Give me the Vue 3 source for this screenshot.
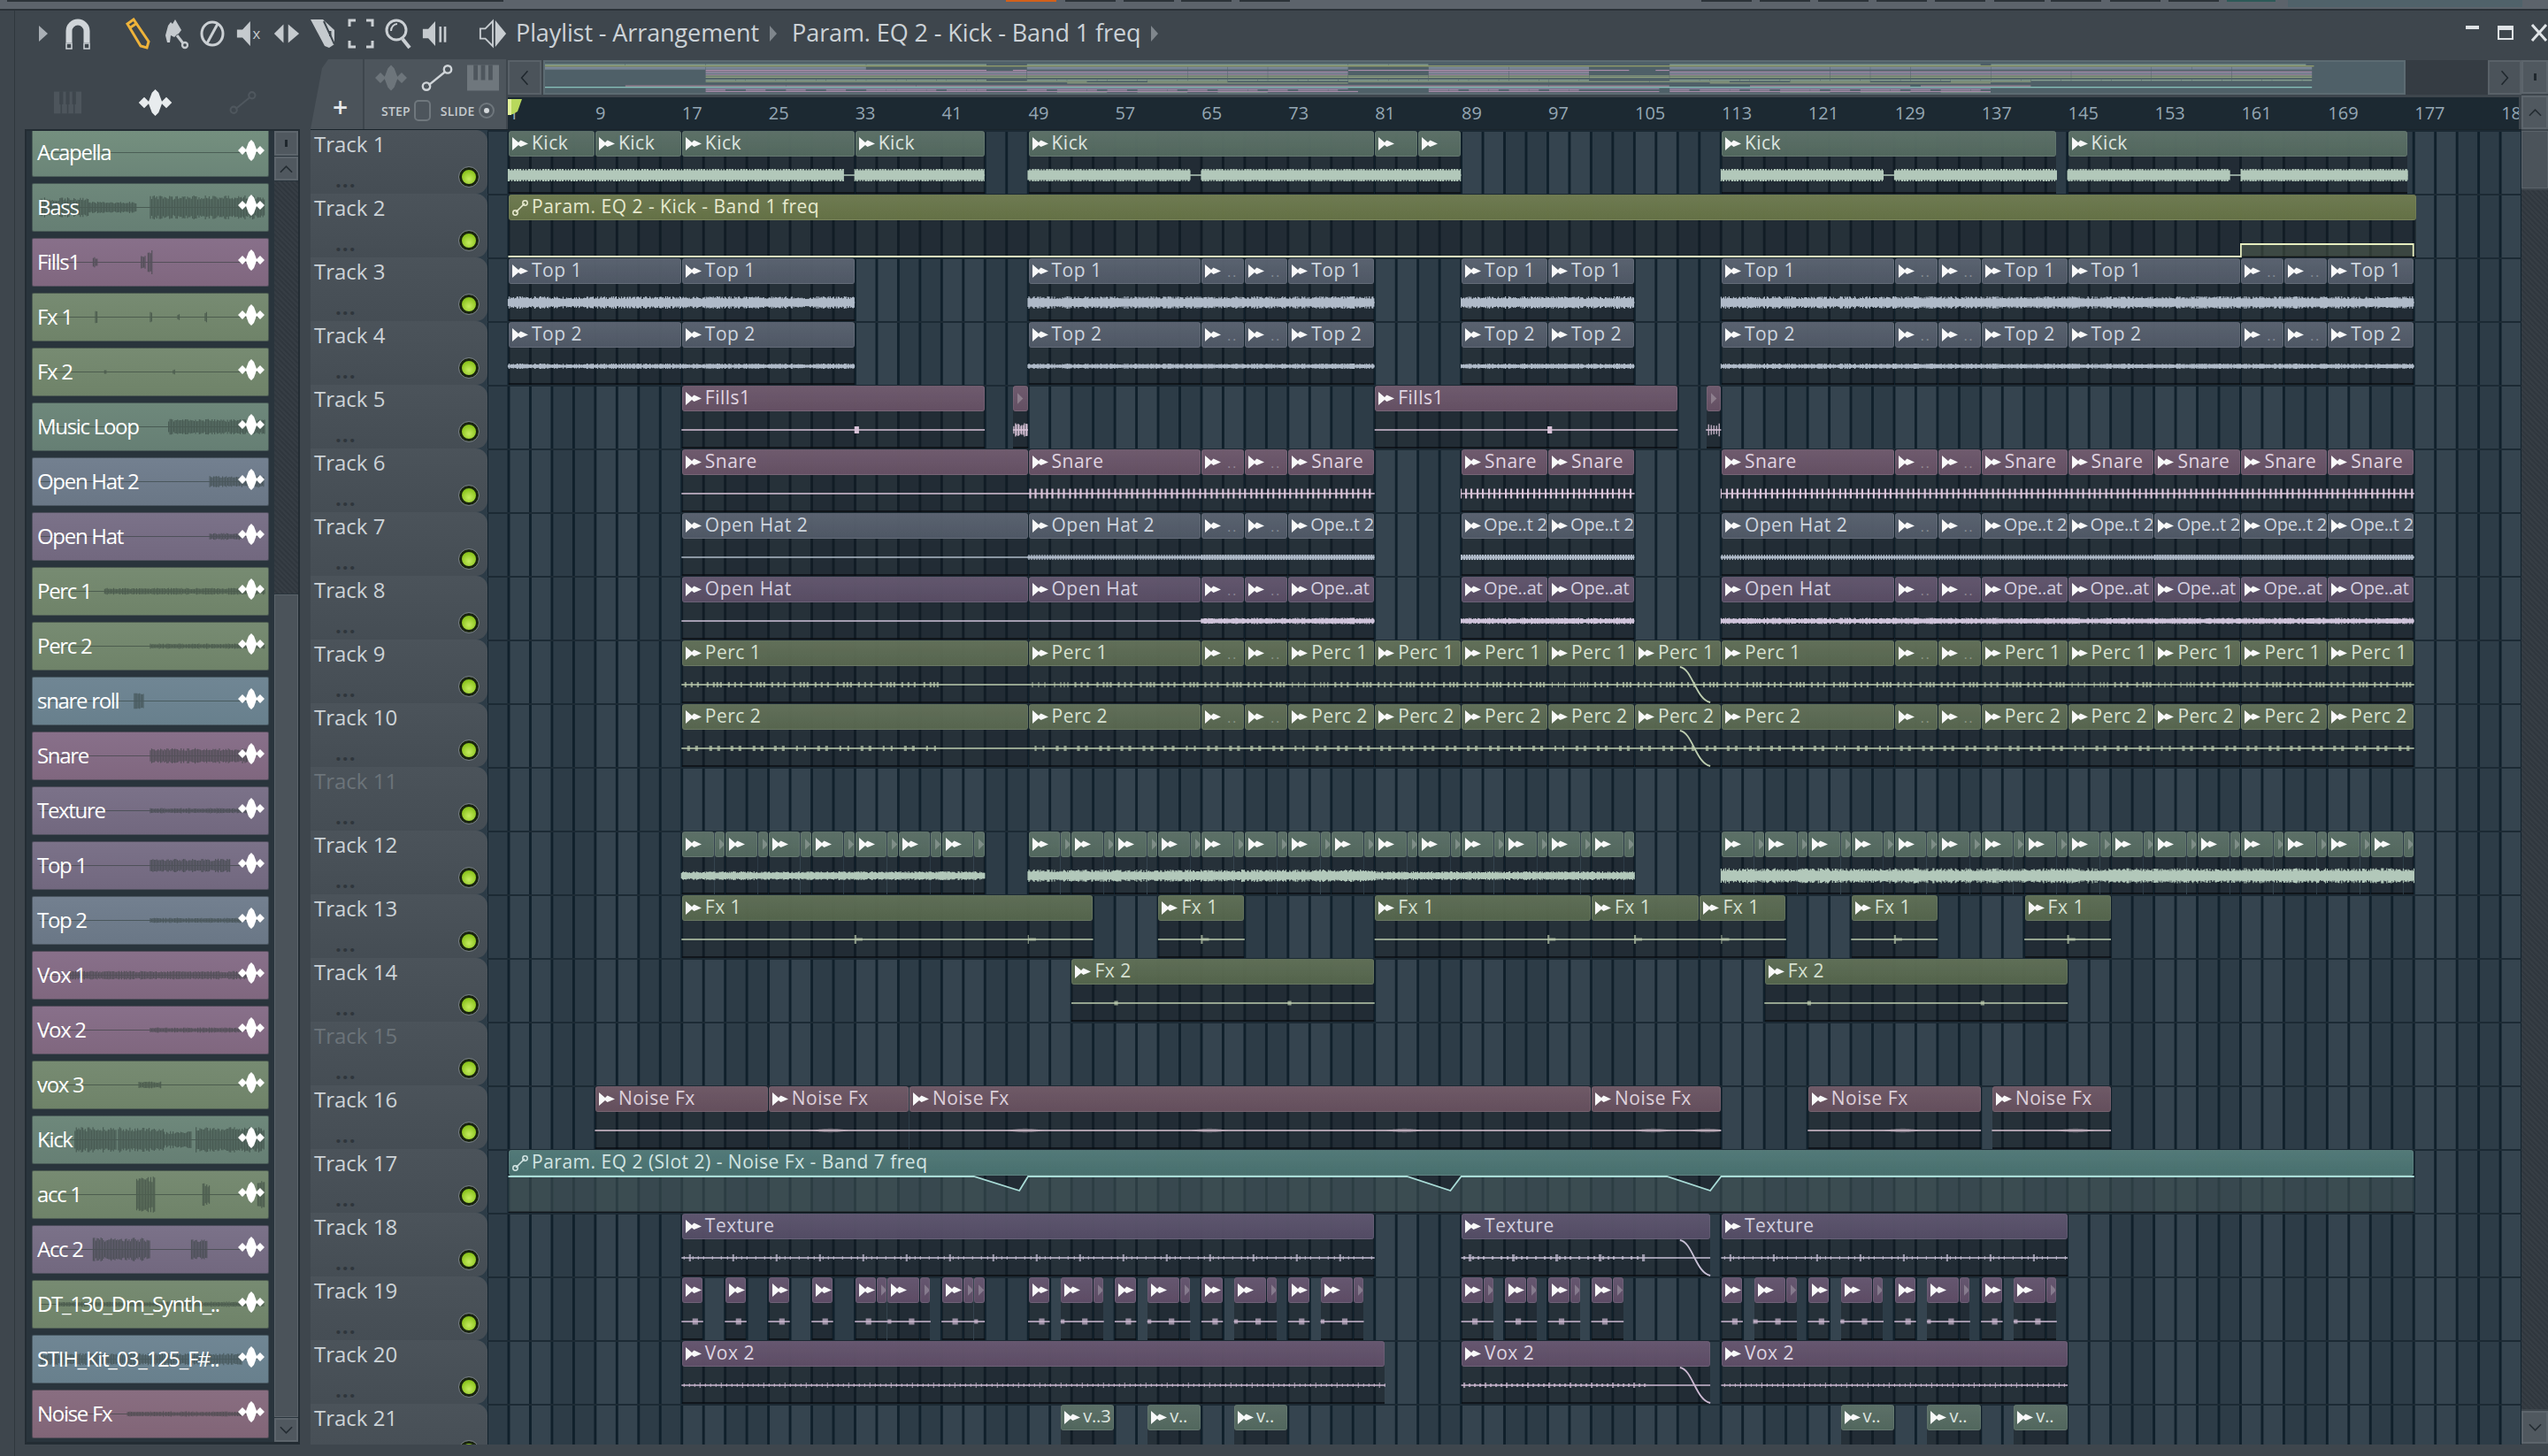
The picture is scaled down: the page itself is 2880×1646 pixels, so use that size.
<template>
  <div class="app">
    <div class="topstrip">
      <span v-for="b in stripBtns" :key="b.x" class="strip-btn" :class="b.c" :style="{ left: b.x + 'px', width: b.w + 'px' }"></span>
    </div>

    <div class="window">
      <div class="titlebar">
        <div class="tools">
          <svg class="ic play" viewBox="0 0 30 30"><path d="M10 6l10 9-10 9z" fill="#a9afb5" /></svg>
          <svg class="ic magnet" viewBox="0 0 30 36"><path d="M5 28V15a10 10 0 0 1 20 0v13" fill="none" stroke="#d0d5d9" stroke-width="7" /><path d="M2 29h6v6H2zM22 29h6v6h-6z" fill="none" stroke="#d0d5d9" stroke-width="1.5" /></svg>
          <svg class="ic pencil" viewBox="0 0 30 36"><path d="M3 7l7-5 17 25-2 7-7-2z" fill="none" stroke="#eeb33a" stroke-width="3" /><path d="M5 12l9-6" stroke="#eeb33a" stroke-width="3" /></svg>
          <svg class="ic" viewBox="0 0 30 36"><path d="M4 20L7 9l3-4 2 2 3-5 7 12-3 4-2 1-3 3-4-2-1 8-3 0z" fill="#c5cace" /><path d="M17 20l7 9" stroke="#c5cace" stroke-width="3" /><circle cx="26" cy="31" r="3" fill="none" stroke="#c5cace" stroke-width="2.4" /></svg>
          <svg class="ic" viewBox="0 0 30 36"><ellipse cx="15" cy="18" rx="12" ry="13" fill="none" stroke="#cbd0d4" stroke-width="3" /><path d="M21 7L9 29" stroke="#cbd0d4" stroke-width="3" /></svg>
          <svg class="ic wide" viewBox="0 0 34 36"><path d="M1 13h7l10-11v32L8 23H1z" fill="#c5cace" /><text x="21" y="25" class="mute-x">x</text></svg>
          <svg class="ic wide" viewBox="0 0 34 36"><path d="M1 18l12-12v24zM33 18L19 6v24z" fill="#c5cace" /></svg>
          <svg class="ic" viewBox="0 0 30 36"><path d="M0 2h14l13 12v16l-6 4-5-2z" fill="#c5cace" /><path d="M15 4l12 26" stroke="#3e464d" stroke-width="2" /><rect x="21" y="15" width="2.5" height="6" fill="#3e464d" /></svg>
          <svg class="ic" viewBox="0 0 30 36"><path d="M2 10V3h7M21 3h7v7M28 26v7h-7M9 33H2v-7" fill="none" stroke="#cbd0d4" stroke-width="3" /></svg>
          <svg class="ic" viewBox="0 0 30 36"><circle cx="13" cy="14" r="11" fill="none" stroke="#cbd0d4" stroke-width="3" /><path d="M7 15a7 8 0 0 1 7-8" fill="none" stroke="#cbd0d4" stroke-width="2" /><path d="M20 24l8 10" stroke="#cbd0d4" stroke-width="4" /></svg>
          <svg class="ic wide" viewBox="0 0 34 36"><path d="M1 12h7L17 2v32L8 24H1z" fill="#c5cace" /><rect x="22" y="9" width="3" height="20" fill="#c5cace" /><rect x="28" y="9" width="3" height="20" fill="#c5cace" /></svg>
        </div>
        <svg class="ic speaker" viewBox="0 0 34 38"><path d="M2 13h6l9-9v30l-9-9H2z" fill="none" stroke="#c8cdd1" stroke-width="2" /><path d="M20 3l13 16-13 16z" fill="#c8cdd1" /></svg>
        <span class="title">Playlist - Arrangement</span>
        <svg class="crumb" viewBox="0 0 10 20"><path d="M1 1l8 9-8 9z" fill="#7f868c" /></svg>
        <span class="title">Param. EQ 2 - Kick - Band 1 freq</span>
        <svg class="crumb" viewBox="0 0 10 20"><path d="M1 1l8 9-8 9z" fill="#7f868c" /></svg>
        <div class="winbtns">
          <span class="w-min"></span>
          <span class="w-max"></span>
          <svg viewBox="0 0 20 22" class="w-x"><path d="M2 2l16 18M18 2L2 20" stroke="#dfe3e6" stroke-width="3" /></svg>
        </div>
      </div>

      <div class="main">
        <div class="side">
          <div class="side-tabs">
            <svg class="st" viewBox="0 0 30 24"><path d="M0 0h30v24H0z" fill="#4d555c" /><path d="M8 0v24M15 0v24M22 0v24" stroke="#3e464d" stroke-width="1.5" /><path d="M6 0h4v14H6zM13 0h4v14h-4zM20 0h4v14h-4z" fill="#3e464d" /></svg>
            <svg class="st wv" viewBox="0 0 30 24"><path :d="waveIcon" fill="#e8ecee" /></svg>
            <svg class="st" viewBox="0 0 30 24"><path d="M7 19L23 6" stroke="#4f575e" stroke-width="2" /><circle cx="5" cy="20" r="3.5" fill="none" stroke="#4f575e" stroke-width="2" /><circle cx="25" cy="4" r="3.5" fill="none" stroke="#4f575e" stroke-width="2" /></svg>
          </div>
          <div class="browser">
            <div class="blist">
              <div v-for="b in browserItems" :key="b.name" class="bitem" :class="'b-' + b.c">
                <svg class="bwave" viewBox="0 0 268 55"><path :d="b.path" /></svg>
                <span class="bname">{{ b.name }}</span>
                <svg class="bicon" viewBox="0 0 30 24"><path :d="waveIcon" /></svg>
              </div>
            </div>
            <div class="bscroll">
              <div class="sbtn small"><i></i></div>
              <div class="sbtn up"><svg viewBox="0 0 16 10"><path d="M1 9l7-7 7 7" /></svg></div>
              <div class="hatch"></div>
              <div class="sthumb"></div>
              <div class="sbtn down"><svg viewBox="0 0 16 10"><path d="M1 1l7 7 7-7" /></svg></div>
            </div>
          </div>
        </div>

        <div class="playlist">
          <div class="pl-main">
            <div class="pl-head">
              <div class="addtab"><span class="plus">+</span></div>
              <div class="snap">
                <div class="snap-icons">
                  <svg viewBox="0 0 30 24"><path :d="waveIcon" fill="#6d757b" /></svg>
                  <svg viewBox="0 0 30 24"><path d="M7 19L23 6" stroke="#d0d5d9" stroke-width="2" /><circle cx="5" cy="20" r="3.5" fill="none" stroke="#d0d5d9" stroke-width="2" /><circle cx="25" cy="4" r="3.5" fill="none" stroke="#d0d5d9" stroke-width="2" /></svg>
                  <svg viewBox="0 0 30 24"><path d="M0 0h30v24H0z" fill="#6f777d" /><path d="M6 0h4v14H6zM13 0h4v14h-4zM20 0h4v14h-4z" fill="#4e565d" /></svg>
                </div>
                <div class="snap-modes">
                  <span class="mode">STEP</span><span class="chk"></span>
                  <span class="mode slide">SLIDE</span><span class="radio"><i></i></span>
                </div>
              </div>
              <div class="head-right">
                <div class="overview-row">
                  <div class="navbtn"><svg viewBox="0 0 14 22"><path d="M11 2L3 11l8 9" /></svg></div>
                  <div class="overview">
                    <svg width="2105" height="38">
                      <rect v-for="(m, i) in miniRects" :key="i" :x="m.x" :y="m.y" :width="m.w" height="1.2" :fill="m.f" />
                    </svg>
                  </div>
                  <div class="ov-gap"></div>
                  <div class="navbtn"><svg viewBox="0 0 14 22"><path d="M3 2l8 9-8 9" /></svg></div>
                </div>
                <div class="ruler">
                  <span v-for="r in rulerMarks" :key="r.n" class="rmark" :style="{ left: r.x + 'px' }">{{ r.n }}</span>
                  <svg class="marker" viewBox="0 0 16 18"><path d="M0 0h16l-5 14-5 3-6 1z" fill="#b8d85c" /><path d="M0 0h4v18H0z" fill="#e3f09b" /></svg>
                </div>
              </div>
            </div>

            <div class="rows">
              <div v-for="t in tracks" :key="t.n" class="row">
                <div class="thead" :class="{ muted: t.muted }">
                  <span class="tname">Track {{ t.n }}</span>
                  <span class="tdots">...</span>
                  <span class="led"></span>
                </div>
                <div class="lane" :class="'t-' + t.c">
                  <div v-for="(cl, i) in t.clips" :key="i" class="clip" :style="{ left: cl.x + 'px', width: cl.w + 'px' }">
                    <div class="clip-head">
                      <svg v-if="t.auto" class="ico-auto" viewBox="0 0 18 18"><path d="M4 14L14 4" stroke="currentColor" stroke-width="1.6" /><circle cx="3.5" cy="14.5" r="2.7" fill="none" stroke="currentColor" stroke-width="1.5" /><circle cx="14.5" cy="3.5" r="2.7" fill="none" stroke="currentColor" stroke-width="1.5" /></svg>
                      <svg v-else-if="cl.tiny" class="ico-tiny" viewBox="0 0 10 16"><path d="M0 1l7 7-7 7z" /></svg>
                      <svg v-else class="ico-clip" viewBox="0 0 18 15"><path d="M0 0l7 6 2.5-2.5L18 7.5 9.5 11 7 9 0 15z" /></svg>
                      <span v-if="cl.label === '..'" class="clip-dots">..</span>
                      <span v-else-if="cl.label" class="clip-label" :class="{ tight: cl.label.includes('..') }">{{ cl.label }}</span>
                    </div>
                  </div>
                  <svg class="wave" width="2296" height="72">
                    <path v-if="t.fill" :d="t.fill" class="afill" />
                    <path v-if="t.line" :d="t.line" class="aline" />
                    <path v-if="t.base" :d="t.base" class="wbase" />
                    <path v-if="t.wave" :d="t.wave" class="wspike" :class="t.soft" />
                    <path v-for="(f, i) in t.fades" :key="i" :d="f" class="fade" />
                  </svg>
                </div>
              </div>
            </div>
          </div>

          <div class="vbar">
            <div class="sbtn square"><i></i></div>
            <div class="sbtn upb"><svg viewBox="0 0 16 10"><path d="M1 9l7-7 7 7" /></svg></div>
            <div class="sthumb vthumb"></div>
            <div class="hatch"></div>
            <div class="sbtn downb"><svg viewBox="0 0 16 10"><path d="M1 1l7 7 7-7" /></svg></div>
          </div>
        </div>
      </div>
    </div>
  </div>
</template>

<script setup>
const PPB = 12.24
const X0 = 23.5
const barX = (b) => X0 + (b - 1) * PPB
const rnd = (i) => {
  const v = Math.sin(i * 12.9898) * 43758.5453
  return v - Math.floor(v)
}

const waveIcon = 'M0 12L5 7 9 11 12 3 15 0 18 3 21 11 25 7 30 12 25 17 21 13 18 21 15 24 12 21 9 13 5 17Z'

const stripBtns = [
  { x: 8, w: 561, c: 'dark' },
  { x: 1137, w: 57, c: 'orange' },
  { x: 2517, w: 55, c: 'teal' },
  { x: 2586, w: 265, c: 'lcd' },
]
for (const x of [1204, 1270, 1335, 1401, 1923, 1989, 2055, 2121, 2187, 2254, 2318, 2385, 2451]) {
  stripBtns.push({ x, w: 57, c: 'dark' })
}

// browser list: name, colour, envelope [from, to, amp]
const browserDefs = [
  ['Acapella', 'green', []],
  ['Bass', 'teal', [[0.02, 0.23, 12], [0.23, 0.44, 7], [0.5, 1, 14]]],
  ['Fills1', 'mauve', [[0.25, 0.27, 6], [0.46, 0.48, 8], [0.49, 0.51, 14]]],
  ['Fx 1', 'olive', [[0.26, 0.27, 7], [0.5, 0.51, 6], [0.62, 0.63, 4], [0.74, 0.75, 6]]],
  ['Fx 2', 'olive', [[0.3, 0.31, 3], [0.6, 0.61, 3]]],
  ['Music Loop', 'teal', [[0.58, 1, 9]]],
  ['Open Hat 2', 'slate', [[0.76, 1, 7]]],
  ['Open Hat', 'purple', [[0.76, 0.9, 4]]],
  ['Perc 1', 'olive', [[0.3, 1, 4]]],
  ['Perc 2', 'olive', [[0.5, 1, 3]]],
  ['snare roll', 'steel', [[0.43, 0.47, 10]]],
  ['Snare', 'mauve', [[0.5, 0.95, 9]]],
  ['Texture', 'purple', [[0.5, 0.95, 3]]],
  ['Top 1', 'purple', [[0.5, 0.85, 8]]],
  ['Top 2', 'slate', [[0.5, 0.9, 3]]],
  ['Vox 1', 'mauve', [[0.15, 0.95, 5]]],
  ['Vox 2', 'mauve', [[0.5, 0.9, 3]]],
  ['vox 3', 'olive', [[0.45, 0.55, 4]]],
  ['Kick', 'teal', [[0.17, 0.35, 15], [0.36, 0.56, 15], [0.56, 0.68, 10], [0.7, 1, 15]]],
  ['acc 1', 'olive', [[0.44, 0.52, 22], [0.73, 0.76, 14], [0.97, 1, 18]]],
  ['Acc 2', 'purple', [[0.25, 0.5, 14], [0.68, 0.75, 12]]],
  ['DT_130_Dm_Synth_..', 'olive', [[0.1, 1, 3]]],
  ['STIH_Kit_03_125_F#..', 'steel', [[0.02, 0.9, 7]]],
  ['Noise Fx', 'rose', [[0.4, 0.9, 3]]],
]
const browserItems = browserDefs.map(([name, c, env], i) => {
  let d = 'M4 27.5H264'
  env.forEach(([a, b, amp], k) => {
    for (let x = a * 268; x <= b * 268; x += 1.5) {
      const h = amp * (0.65 + 0.35 * rnd(x + i * 7 + k))
      d += `M${x.toFixed(1)} ${(27.5 - h).toFixed(1)}V${(27.5 + h).toFixed(1)}`
    }
  })
  return { name, c, path: d }
})

// arrangement helpers
const long = (a, l1, l2) => [
  [17, 49, a], [49, 65, a], [65, 69, '..'], [69, 73, '..'], [73, 81, l1],
  [89, 97, l1], [97, 105, l1],
  [113, 129, a], [129, 133, '..'], [133, 137, '..'], [137, 145, l2], [145, 153, l2], [153, 161, l2], [161, 169, l2], [169, 177, l2],
]
const topClips = (a) => [
  [1, 17, a], [17, 33, a], [49, 65, a], [65, 69, '..'], [69, 73, '..'], [73, 81, a],
  [89, 97, a], [97, 105, a],
  [113, 129, a], [129, 133, '..'], [133, 137, '..'], [137, 145, a], [145, 161, a], [161, 165, '..'], [165, 169, '..'], [169, 177, a],
]
const perc = (a) => [
  [17, 49, a], [49, 65, a], [65, 69, '..'], [69, 73, '..'], [73, 81, a], [81, 89, a], [89, 97, a], [97, 105, a], [105, 113, a],
  [113, 129, a], [129, 133, '..'], [133, 137, '..'], [137, 145, a], [145, 153, a], [153, 161, a], [161, 169, a], [169, 177, a],
]
const pairs = (from, to) => {
  const out = []
  for (let b = from; b < to; b += 4) {
    out.push([b, b + 3])
    if (b + 4 <= to) out.push([b + 3, b + 4])
  }
  return out
}
const blip = (list, b, w) => list.some((p) => b >= p && b < p + w)
const pat = (x, period, list, w) => {
  const ph = ((x % period) + period) % period
  return list.some((p) => ph >= p && ph < p + w)
}
const soft = (list, b, w, a) => {
  for (const p of list) {
    if (b >= p && b < p + w) return a * Math.sin(((b - p) / w) * Math.PI)
  }
  return 0
}

const defs = [
  { c: 'kick', clips: [[1, 9, 'Kick'], [9, 17, 'Kick'], [17, 33, 'Kick'], [33, 45, 'Kick'], [49, 81, 'Kick'], [81, 85, ''], [85, 89, ''], [113, 144, 'Kick'], [145, 176.4, 'Kick']],
    amp: (b, x) => ([32, 64, 128, 160].some((g) => b >= g && b < g + 1) ? 0 : x % 3.2 < 1.6 ? 7 : 5.5) },
  { c: 'olive', auto: true, clips: [[1, 177.2, 'Param. EQ 2 - Kick - Band 1 freq']], kind: 'eq1' },
  { c: 'top', clips: topClips('Top 1'), amp: (b, x) => 4 + 3 * rnd(x) },
  { c: 'top', clips: topClips('Top 2'), amp: (b, x) => 1.5 + 1.5 * rnd(x) },
  { c: 'mauve', clips: [[17, 45, 'Fills1'], [47.6, 49, ''], [81, 109, 'Fills1'], [111.6, 113, '']],
    amp: (b, x) => (blip([33, 97], b, 0.35) ? 4 : (b > 47.6 && b < 49) || (b > 111.6 && b < 113) ? (x % 3 < 1.5 ? 4 + 4 * rnd(x) : 0) : 0) },
  { c: 'mauve', clips: [...long('Snare', 'Snare', 'Snare')], amp: (b, x) => (b < 49 ? 0 : x % 6.4 < 2 ? 5.5 : 0) },
  { c: 'top', clips: long('Open Hat 2', 'Ope..t 2', 'Ope..t 2'), amp: (b, x) => (b < 49 ? 0 : x % 3 < 1.5 ? 3 : 1.5) },
  { c: 'plum', clips: long('Open Hat', 'Ope..at', 'Ope..at'), amp: (b, x) => (b < 65 ? 0 : 2 + 1.5 * rnd(x)) },
  { c: 'perc', clips: perc('Perc 1'), fade: true, soft: 'dim', amp: (b, x) => ((b > 41 && b < 49) ? 0 : pat(x, 48.96, [4, 11, 18, 29, 36, 40, 44], 1.6) ? 3 : 0) },
  { c: 'perc', clips: perc('Perc 2'), fade: true, soft: 'dim', amp: (b, x) => ((b > 41 && b < 49) ? 0 : pat(x, 24.48, [7, 16], 2.6) ? 3 : 0) },
  { c: 'none', muted: true, clips: [] },
  { c: 'kick', clips: [...pairs(17, 45), ...pairs(49, 105), ...pairs(113, 177)], noLabel: true,
    amp: (b, x) => (b < 45 ? 3 + 2 * rnd(x) : b < 105 ? (b < 81 ? 4 + 3 * rnd(x) : 3 + 2 * rnd(x)) : 5 + 3.5 * rnd(x)) },
  { c: 'fx', clips: [[17, 55, 'Fx 1'], [61, 69, 'Fx 1'], [81, 101, 'Fx 1'], [101, 111, 'Fx 1'], [111, 119, 'Fx 1'], [125, 133, 'Fx 1'], [141, 149, 'Fx 1']], soft: 'dim',
    amp: (b) => (blip([33, 49, 65, 97, 105, 113, 129, 145], b, 0.1) ? 5 : blip([33.1, 49.1, 65.1, 97.1, 105.1, 113.1, 129.1, 145.1], b, 0.6) ? 1.5 : 0) },
  { c: 'fx', clips: [[53, 81, 'Fx 2'], [117, 145, 'Fx 2']], soft: 'dim', amp: (b) => (blip([57, 73, 121, 137], b, 0.3) ? 2.5 : 0) },
  { c: 'none', muted: true, clips: [] },
  { c: 'rose', clips: [[9, 25, 'Noise Fx'], [25, 38, 'Noise Fx'], [38, 101, 'Noise Fx'], [101, 113, 'Noise Fx'], [121, 137, 'Noise Fx'], [138, 149, 'Noise Fx']], soft: 'faint',
    amp: (b) => soft([29, 47, 64, 82, 105, 110, 128, 144], b, 3.5, 2.2) },
  { c: 'teal', auto: true, clips: [[1, 177, 'Param. EQ 2 (Slot 2) - Noise Fx - Band 7 freq']], kind: 'eq7' },
  { c: 'violet', clips: [[17, 81, 'Texture'], [89, 112, 'Texture'], [113, 145, 'Texture']], fade: true, soft: 'dim',
    amp: (b, x) => (b > 106 && b < 113 ? 0 : pat(x, 49, [2, 12, 18, 24, 34, 44], 1.2) ? 2 : pat(x, 49, [8, 9.6], 1.2) ? 4 : 0) },
  { c: 'mauve2', noLabel: true, soft: 'dim', clips: [[17, 19], [21, 23], [25, 27], [29, 31], [33, 35], [35, 36], [36, 39], [39, 40], [41, 43], [43, 44], [44, 45], [49, 51], [52, 55], [55, 56], [57, 59], [60, 63], [63, 64], [65, 67], [68, 71], [71, 72], [73, 75], [76, 79], [79, 80], [89, 91], [91, 92], [93, 95], [95, 96], [97, 99], [99, 100], [101, 103], [103, 104], [113, 115], [116, 119], [119, 120], [121, 123], [124, 127], [127, 128], [129, 131], [132, 135], [135, 136], [137, 139], [140, 143], [143, 144]],
    amp: (b) => { const p = (b - 1) % 4; return p > 1 && p < 1.5 ? 3.5 : p > 3 && p < 3.4 ? 2.5 : 0 } },
  { c: 'mauve2', clips: [[17, 82, 'Vox 2'], [89, 112, 'Vox 2'], [113, 145, 'Vox 2']], fade: true, soft: 'dim',
    amp: (b, x) => ((b > 106 && b < 113) ? 0 : x % 6 < 1.6 ? (x % 24 < 1.6 ? 3 : 2) : 0) },
  { c: 'kick', clips: [[52, 57, 'v..3'], [60, 65, 'v..'], [68, 73, 'v..'], [124, 129, 'v..'], [132, 137, 'v..'], [140, 145, 'v..']] },
]

const CY = 51
const tracks = defs.map((d, i) => {
  const t = { n: i + 1, c: d.c, muted: d.muted, auto: d.auto, soft: d.soft, clips: [], fades: [] }
  t.clips = d.clips.map(([s, e, label]) => ({
    x: barX(s) + 0.5,
    w: (e - s) * PPB - 1,
    label,
    tiny: (e - s) * PPB < 20,
  }))
  if (d.amp) {
    let base = ''
    let wave = ''
    d.clips.forEach(([s, e]) => {
      const x0 = barX(s)
      const x1 = barX(e)
      base += `M${x0.toFixed(1)} ${CY}H${x1.toFixed(1)}`
      for (let x = x0; x < x1; x += 1) {
        const b = (x - X0) / PPB + 1
        const a = d.amp(b, x - X0)
        if (a > 0) wave += `M${x.toFixed(1)} ${(CY - a).toFixed(1)}V${(CY + a).toFixed(1)}`
      }
    })
    t.base = base
    t.wave = wave
  }
  if (d.fade) {
    const a = barX(109.2)
    const b = barX(112)
    t.fades.push(`M${a} 31C${a + 14} 33 ${a + 18} 68 ${b} 71`)
  }
  if (d.kind === 'eq1') {
    const s = barX(161)
    const e = barX(177)
    t.line = `M${X0} 71H${s}V57H${e - 1}V71`
    t.fill = `M${s} 71V57H${e - 1}V71Z`
  }
  if (d.kind === 'eq7') {
    const pts = [[44, 48.2, 49], [84, 88, 89], [108, 112, 113]]
    let p = `M${X0} 31`
    pts.forEach(([a, m, b]) => {
      p += `H${barX(a).toFixed(1)}L${barX(m).toFixed(1)} 47L${barX(b).toFixed(1)} 31`
    })
    p += `H${barX(177)}`
    t.line = p
    t.fill = `${p}V71H${X0}Z`
  }
  return t
})

const rulerMarks = []
for (let n = 1; n <= 185; n += 8) {
  rulerMarks.push({ n, x: (n - 1) * PPB + 1 })
}

const miniColors = { kick: '#8ea896', olive: '#98a36a', top: '#8692a4', mauve: '#a98ba8', plum: '#97849f', perc: '#8c9c7e', fx: '#8c9c7e', rose: '#a48697', teal: '#8ccac2', violet: '#9186a6', mauve2: '#a48aa6' }
const miniRects = []
defs.forEach((d, i) => {
  d.clips.forEach(([s, e]) => {
    miniRects.push({ x: (s - 1) * 11.35, y: 2.5 + i * 1.6, w: (e - s) * 11.35 - 0.4, f: miniColors[d.c] })
  })
})
</script>

<style>
body {
  background: #3e464d;
  overflow: hidden;
}
</style>

<style scoped>
.app {
  width: 2880px;
  height: 1646px;
  background: #3e464d;
  overflow: hidden;
  font-family: 'Open Sans', 'Noto Sans', sans-serif;
  display: flex;
  flex-direction: column;
}

.topstrip {
  position: relative;
  height: 10px;
  background: #5c636b;
  border-bottom: 2px solid #2b3238;
  flex-shrink: 0;
  box-sizing: content-box;
}
.strip-btn {
  position: absolute;
  top: 0;
  height: 2px;
  background: #2c3339;
}
.strip-btn.orange { background: #d2601a; }
.strip-btn.teal { background: #2d5a58; }
.strip-btn.lcd { height: 8px; background: #50626a; }

.window {
  flex: 1;
  min-height: 0;
  display: flex;
  flex-direction: column;
  margin-left: 16px;
  border-left: 1px solid #2f373d;
  padding-bottom: 13px;
}

.titlebar {
  height: 55px;
  flex-shrink: 0;
  display: flex;
  align-items: center;
  padding-left: 17px;
}
.tools {
  display: flex;
  align-items: center;
  gap: 12px;
  margin-top: -3px;
}
.ic {
  width: 30px;
  height: 36px;
  flex-shrink: 0;
}
.ic.magnet { margin-left: -3px; margin-right: 26px; }
.mute-x {
  font-family: 'Open Sans', sans-serif;
  font-size: 19px;
  fill: #c5cace;
}
.speaker {
  width: 32px;
  height: 38px;
  margin-left: 34px;
  margin-top: -4px;
}
.title {
  font-size: 27px;
  color: #ccd2d7;
  margin-left: 10px;
  margin-top: -6px;
  white-space: nowrap;
  letter-spacing: -0.1px;
}
.crumb {
  width: 10px;
  height: 20px;
  margin-left: 11px;
  margin-top: -3px;
}
.crumb + .title { margin-left: 16px; }
.winbtns {
  margin-left: auto;
  display: flex;
  align-items: center;
  gap: 21px;
  margin-top: -6px;
}
.w-min {
  width: 15px;
  height: 4px;
  background: #dfe3e6;
  margin-bottom: 12px;
}
.w-max {
  width: 18px;
  height: 16px;
  border: 2px solid #dfe3e6;
  border-top-width: 5px;
  box-sizing: border-box;
}
.w-x { width: 20px; height: 22px; margin-left: -2px; }

.main {
  flex: 1;
  min-height: 0;
  display: flex;
}

.side {
  width: 334px;
  flex-shrink: 0;
  display: flex;
  flex-direction: column;
}
.side-tabs {
  height: 79px;
  flex-shrink: 0;
  display: flex;
  align-items: flex-end;
  padding: 0 0 17px 44px;
  gap: 63px;
  box-sizing: border-box;
}
.st { width: 31px; height: 26px; }
.st.wv { width: 41px; height: 30px; margin-bottom: -2px; }

.browser {
  height: 1487px;
  margin-left: 11px;
  width: 311px;
  background: #29343c;
  border: 2px solid #232c33;
  border-bottom-width: 3px;
  box-sizing: border-box;
  display: flex;
  overflow: hidden;
}
.blist {
  width: 274px;
  padding-left: 6px;
  flex-shrink: 0;
  display: flex;
  flex-direction: column;
  gap: 7px;
  margin-top: -3px;
  box-sizing: content-box;
}
.bitem {
  position: relative;
  height: 55px;
  width: 268px;
  flex-shrink: 0;
  box-sizing: border-box;
  border-radius: 2px;
  border: 1px solid rgba(40, 50, 55, 0.5);
  display: flex;
  align-items: center;
  padding-left: 5px;
  overflow: hidden;
  color: #fff;
}
.b-green { background: linear-gradient(#75907f, #6b8578); }
.b-teal { background: linear-gradient(#6e887b, #667f74); }
.b-mauve { background: linear-gradient(#88708a, #80677f); }
.b-olive { background: linear-gradient(#778b72, #6f8369); }
.b-slate { background: linear-gradient(#738090, #6a7786); }
.b-purple { background: linear-gradient(#7b7289, #72687f); }
.b-steel { background: linear-gradient(#708694, #68808d); }
.b-rose { background: linear-gradient(#896e81, #816577); }
.bwave {
  position: absolute;
  left: 0;
  top: 0;
  width: 100%;
  height: 100%;
}
.bwave path {
  fill: none;
  stroke: rgba(45, 58, 55, 0.55);
  stroke-width: 1.2;
}
.bname {
  position: relative;
  font-size: 24px;
  letter-spacing: -1.3px;
  white-space: nowrap;
  margin-top: -3px;
}
.bicon {
  position: absolute;
  right: 4px;
  top: 12px;
  width: 30px;
  height: 24px;
}
.bicon path { fill: #fff; }

.bscroll {
  width: 29px;
  flex: 1;
  display: flex;
  flex-direction: column;
  gap: 1px;
}
.sbtn {
  flex-shrink: 0;
  background: #50585f;
  border: 2px solid #5d656c;
  box-sizing: border-box;
  display: flex;
  align-items: center;
  justify-content: center;
}
.sbtn i {
  width: 3px;
  height: 8px;
  background: #1f272d;
}
.sbtn svg {
  width: 15px;
  height: 10px;
}
.sbtn svg path {
  fill: none;
  stroke: #242c32;
  stroke-width: 1.8;
}
.sbtn.small { height: 28px; }
.sbtn.up { height: 27px; }
.sbtn.down { height: 27px; }
.hatch {
  flex: 1;
  background: repeating-linear-gradient(45deg, #363d44 0 2px, #30373e 2px 4px);
}
.sthumb {
  height: 930px;
  flex-shrink: 0;
  background: #4b535a;
  border: 1px solid #5b636a;
  box-sizing: border-box;
}

.playlist {
  flex: 1;
  min-width: 0;
  display: flex;
}
.pl-main {
  flex: 1;
  min-width: 0;
  display: flex;
  flex-direction: column;
}
.pl-head {
  height: 79px;
  flex-shrink: 0;
  display: flex;
}
.addtab {
  width: 59px;
  background: #4b535a;
  clip-path: polygon(0 100%, 13px 10px, 20px 0, 100% 0, 100% 100%);
  display: flex;
  align-items: flex-end;
  justify-content: center;
  padding-left: 8px;
  box-sizing: border-box;
}
.plus {
  color: #e6e9eb;
  font-size: 30px;
  font-weight: 600;
  line-height: 50px;
}
.snap {
  width: 160px;
  margin-left: 2px;
  background: #4d555c;
  display: flex;
  flex-direction: column;
}
.snap-icons {
  display: flex;
  justify-content: space-between;
  padding: 6px 8px 0 12px;
}
.snap-icons svg {
  width: 36px;
  height: 30px;
}
.snap-modes {
  display: flex;
  align-items: center;
  margin-top: 10px;
  padding-left: 19px;
}
.mode {
  font-size: 14px;
  font-weight: 600;
  letter-spacing: 0.2px;
  color: #c5cace;
}
.mode.slide { margin-left: 11px; }
.chk {
  width: 19px;
  height: 24px;
  border: 2px solid #6f777d;
  border-radius: 5px;
  margin-left: 4px;
  box-sizing: border-box;
}
.radio {
  width: 18px;
  height: 18px;
  border: 2px solid #6f777d;
  border-radius: 50%;
  margin-left: 5px;
  box-sizing: border-box;
  display: flex;
  align-items: center;
  justify-content: center;
}
.radio i {
  width: 6px;
  height: 6px;
  background: #d4d8db;
  border-radius: 50%;
}

.head-right {
  flex: 1;
  min-width: 0;
  margin-left: 2px;
  display: flex;
  flex-direction: column;
}
.overview-row {
  height: 39px;
  margin-top: 1px;
  flex-shrink: 0;
  display: flex;
}
.navbtn {
  width: 38px;
  background: #4b535a;
  border: 2px solid #596168;
  box-sizing: border-box;
  flex-shrink: 0;
  display: flex;
  align-items: center;
  justify-content: center;
}
.navbtn svg {
  width: 12px;
  height: 20px;
}
.navbtn svg path {
  fill: none;
  stroke: #1f272d;
  stroke-width: 1.8;
}
.overview {
  width: 2105px;
  margin-left: 2px;
  flex-shrink: 0;
  background: #4f6068;
  border: 2px solid #5c6b72;
  box-sizing: border-box;
  overflow: hidden;
}
.overview svg { display: block; }
.ov-gap {
  flex: 1;
  background: #353c43;
}
.ruler {
  position: relative;
  height: 36px;
  margin-top: 3px;
  background: #1c2932;
  overflow: hidden;
  margin-right: 3px;
}
.rmark {
  position: absolute;
  top: 4px;
  font-size: 20px;
  line-height: 28px;
  color: #95a7b4;
}
.marker {
  position: absolute;
  left: 0;
  top: 2px;
  width: 16px;
  height: 18px;
}

.rows {
  flex: 1;
  min-height: 0;
  overflow: hidden;
  background: #2d3c47;
  border-top: 1px solid #1a242b;
}
.row {
  display: flex;
  height: 72px;
}
.thead {
  position: relative;
  width: 200px;
  flex-shrink: 0;
  background: linear-gradient(#4b535a, #454d54);
  border-radius: 0 13px 13px 0;
  box-sizing: border-box;
}
.tname {
  position: absolute;
  left: 4px;
  top: 0;
  font-size: 24px;
  line-height: 32px;
  color: #cdd3d7;
}
.thead.muted .tname { color: #6c747a; }
.tdots {
  position: absolute;
  left: 28px;
  top: 44px;
  font-size: 24px;
  line-height: 24px;
  font-weight: 700;
  letter-spacing: 1px;
  color: #2f363c;
}
.led {
  position: absolute;
  left: 168px;
  top: 42px;
  width: 22px;
  height: 22px;
  box-sizing: border-box;
  border-radius: 50%;
  border: 3px solid #19240f;
  outline: 1px solid #767d83;
  background: radial-gradient(circle at 50% 65%, #c4ec5e, #8cc41e 70%, #649a10);
}

.lane {
  position: relative;
  flex: 1;
  min-width: 0;
  overflow: hidden;
  background-color: #2d3c47;
  background-image:
    linear-gradient(#1c2a34, #1c2a34),
    linear-gradient(90deg, #10202b 2.5px, transparent 2.5px),
    linear-gradient(90deg, #35444f 50%, #2d3c47 50%);
  background-size: 100% 2px, 24.48px 100%, 97.92px 100%;
  background-position: 0 0, 22.5px 0, 23.5px 0;
  background-repeat: no-repeat, repeat-x, repeat-x;
}
.clip {
  position: absolute;
  top: 1px;
  height: 71px;
  background: rgba(20, 24, 28, 0.42);
  border-bottom: 2px solid rgba(8, 12, 16, 0.7);
  box-sizing: border-box;
}
.clip-head {
  height: 29px;
  border-radius: 3px;
  border: 1px solid rgba(255, 255, 255, 0.07);
  background: linear-gradient(rgba(255, 255, 255, 0.05), rgba(0, 0, 0, 0.03)), var(--clip);
  box-sizing: border-box;
  display: flex;
  align-items: center;
  padding-left: 3px;
  color: var(--txt);
  overflow: hidden;
  white-space: nowrap;
  opacity: 0.97;
}
.ico-clip {
  width: 18px;
  height: 15px;
  flex-shrink: 0;
  fill: #fff;
}
.ico-auto {
  width: 18px;
  height: 18px;
  flex-shrink: 0;
}
.ico-tiny {
  width: 9px;
  height: 15px;
  flex-shrink: 0;
  fill: rgba(255, 255, 255, 0.25);
  margin-left: 1px;
}
.clip-label {
  margin-left: 4px;
  font-size: 21px;
  line-height: 26px;
  letter-spacing: 0.5px;
  margin-top: -3px;
}
.clip-label.tight {
  font-size: 20px;
  letter-spacing: -0.2px;
  margin-left: 3px;
}
.clip-dots {
  margin-left: 7px;
  font-size: 15px;
  color: rgba(255, 255, 255, 0.35);
  letter-spacing: 2px;
}
.wave {
  position: absolute;
  left: 0;
  top: 0;
  pointer-events: none;
}
.wave path { fill: none; }
.wave .wbase { stroke: var(--wave); stroke-width: 1.4; }
.wave .wspike { stroke: var(--wave); stroke-width: 1.2; }
.wave .wspike.dim { opacity: 0.7; }
.wave .wspike.faint { opacity: 0.35; }
.wave .fade { stroke: var(--wave); stroke-width: 1.8; }
.wave .aline { stroke: var(--line); stroke-width: 1.8; }
.wave .afill { fill: var(--area); stroke: none; }

.t-kick { --clip: #566c62; --wave: #b2c8ba; --txt: #e3ece6; }
.t-olive { --clip: #6a7749; --wave: #e2e9bd; --txt: #eef0d4; --line: #e6edbf; --area: rgba(106, 119, 90, 0.35); }
.t-top { --clip: #535c6a; --wave: #afbac8; --txt: #d5dce5; }
.t-mauve { --clip: #6a5468; --wave: #d8c2d8; --txt: #e8dbe8; }
.t-plum { --clip: #5c5068; --wave: #cfc4da; --txt: #dcd6e6; }
.t-perc { --clip: #5b6a52; --wave: #bdcdaf; --txt: #dde7d7; }
.t-fx { --clip: #58694f; --wave: #bdcdaf; --txt: #dde7d7; }
.t-rose { --clip: #6a5361; --wave: #dac3d2; --txt: #e3d6e0; }
.t-teal { --clip: #4c7674; --wave: #a9dcd7; --txt: #d9ebe9; --line: #a9dcd7; --area: rgba(110, 140, 140, 0.3); }
.t-violet { --clip: #574f69; --wave: #c8c0d6; --txt: #d9d5e3; }
.t-mauve2 { --clip: #61506a; --wave: #cdb9d2; --txt: #e4dbe8; }

.vbar {
  width: 30px;
  flex-shrink: 0;
  display: flex;
  flex-direction: column;
  gap: 2px;
  padding-top: 1px;
  height: 1564px;
}
.sbtn.square { height: 38px; }
.sbtn.upb { height: 38px; }
.sbtn.downb { height: 37px; }
.vthumb { height: 65px; }
</style>
